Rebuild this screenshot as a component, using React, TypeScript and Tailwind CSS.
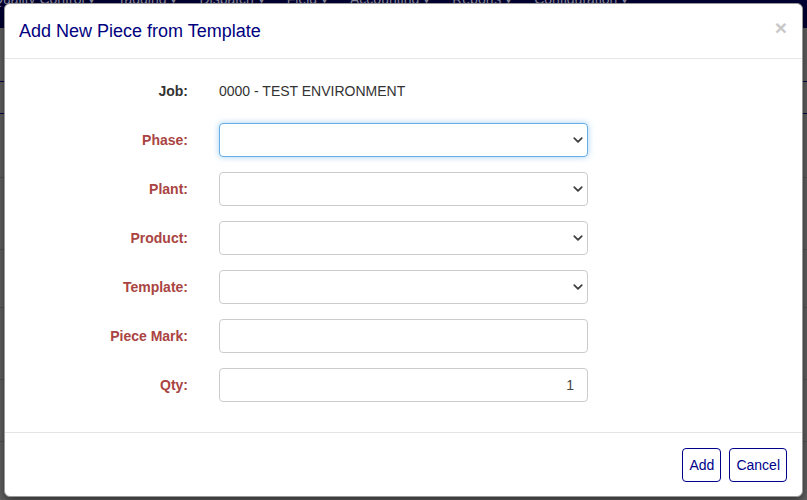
import React from 'react';

// Labels in the form column, in order
const fields = [
  { label: 'Phase:', kind: 'select', focused: true },
  { label: 'Plant:', kind: 'select' },
  { label: 'Product:', kind: 'select' },
  { label: 'Template:', kind: 'select' },
  { label: 'Piece Mark:', kind: 'text' },
  { label: 'Qty:', kind: 'qty' },
];

const navItems = ['Quality Control', 'Tagging', 'Dispatch', 'Field', 'Accounting', 'Reports', 'Configuration'];

const Chevron: React.FC = () => (
  <svg className="pointer-events-none absolute right-[5px] top-1/2 -translate-y-1/2 w-[10px] h-[10px]" viewBox="0 0 16 16" fill="none">
    <path d="M2 5l6 6 6-6" stroke="#3f3f3f" strokeWidth="2.8" strokeLinecap="round" strokeLinejoin="round" />
  </svg>
);

const App: React.FC = () => {
  return (
    <div className="relative w-[807px] h-[500px] overflow-hidden bg-[#606060] font-['Liberation_Sans',Arial,sans-serif]">
      {/* page behind the overlay */}
      <div className="h-[28px] bg-[#000033] flex items-end gap-[22px] -ml-[8px] overflow-hidden">
        {navItems.map((n) => (
          <span key={n} className="text-[#8c8ca0] text-[14px] leading-none translate-y-[-22px] whitespace-nowrap">
            {n} ▾
          </span>
        ))}
      </div>
      <div className="h-[54px] border-b border-[#000040]" />
      <div className="h-[32px] border-b border-[#000040]" />
      <div className="h-[64px] border-b border-[#525252]" />
      <div className="h-[72px] border-b border-[#525252]" />
      <div className="h-[58px] border-b border-[#525252]" />
      <div className="h-[72px] border-b border-[#525252]" />
      <div className="h-[62px] border-b border-[#525252]" />

      {/* modal */}
      <div className="absolute left-[4px] top-[3px] w-[799px] h-[494px] bg-white rounded-[6px] border border-[#999] shadow-[0_3px_9px_rgba(0,0,0,0.5)] flex flex-col">
        <div className="h-[55px] shrink-0 flex items-center justify-between px-[14px] border-b border-[#e5e5e5]">
          <h4 className="text-[18px] text-[#000080] leading-none">Add New Piece from Template</h4>
          <span className="text-[#c8c8c8] text-[21px] font-bold leading-none mr-[1px] -mt-[8px]">×</span>
        </div>

        <div className="flex-1 px-[15px] pt-[15px] flex flex-col gap-[15px] border-b border-[#e5e5e5]">
          <div className="flex items-center h-[34px]">
            <label className="w-[168px] text-right text-[14px] font-bold text-[#333]">Job:</label>
            <span className="ml-[31px] text-[14px] text-[#333]">0000 - TEST ENVIRONMENT</span>
          </div>
          {fields.map((f) => (
            <div key={f.label} className="flex items-center h-[34px]">
              <label className="w-[168px] text-right text-[14px] font-bold text-[#a94442]">{f.label}</label>
              <div className="relative ml-[31px] w-[369px] h-[34px]">
                {f.kind === 'select' ? (
                  <>
                    <select
                      className={
                        f.focused
                          ? 'appearance-none w-full h-full rounded-[4px] border border-[#66afe9] bg-white shadow-[0_0_6px_rgba(102,175,233,0.6)] outline-none'
                          : 'appearance-none w-full h-full rounded-[4px] border border-[#ccc] bg-white outline-none'
                      }
                    />
                    <Chevron />
                  </>
                ) : (
                  <input
                    readOnly
                    defaultValue={f.kind === 'qty' ? '1' : ''}
                    className="w-full h-full rounded-[4px] border border-[#ccc] bg-white px-[13px] text-[14px] text-[#444] text-right outline-none"
                  />
                )}
              </div>
            </div>
          ))}
        </div>

        <div className="h-[63px] shrink-0 flex items-start justify-end gap-[8px] px-[15px] pt-[15px]">
          <button className="h-[34px] px-[6px] rounded-[4px] border border-[#00008b] text-[14px] text-[#00008b] bg-white">Add</button>
          <button className="h-[34px] px-[6px] rounded-[4px] border border-[#00008b] text-[14px] text-[#00008b] bg-white">Cancel</button>
        </div>
      </div>
    </div>
  );
};

export default App;
